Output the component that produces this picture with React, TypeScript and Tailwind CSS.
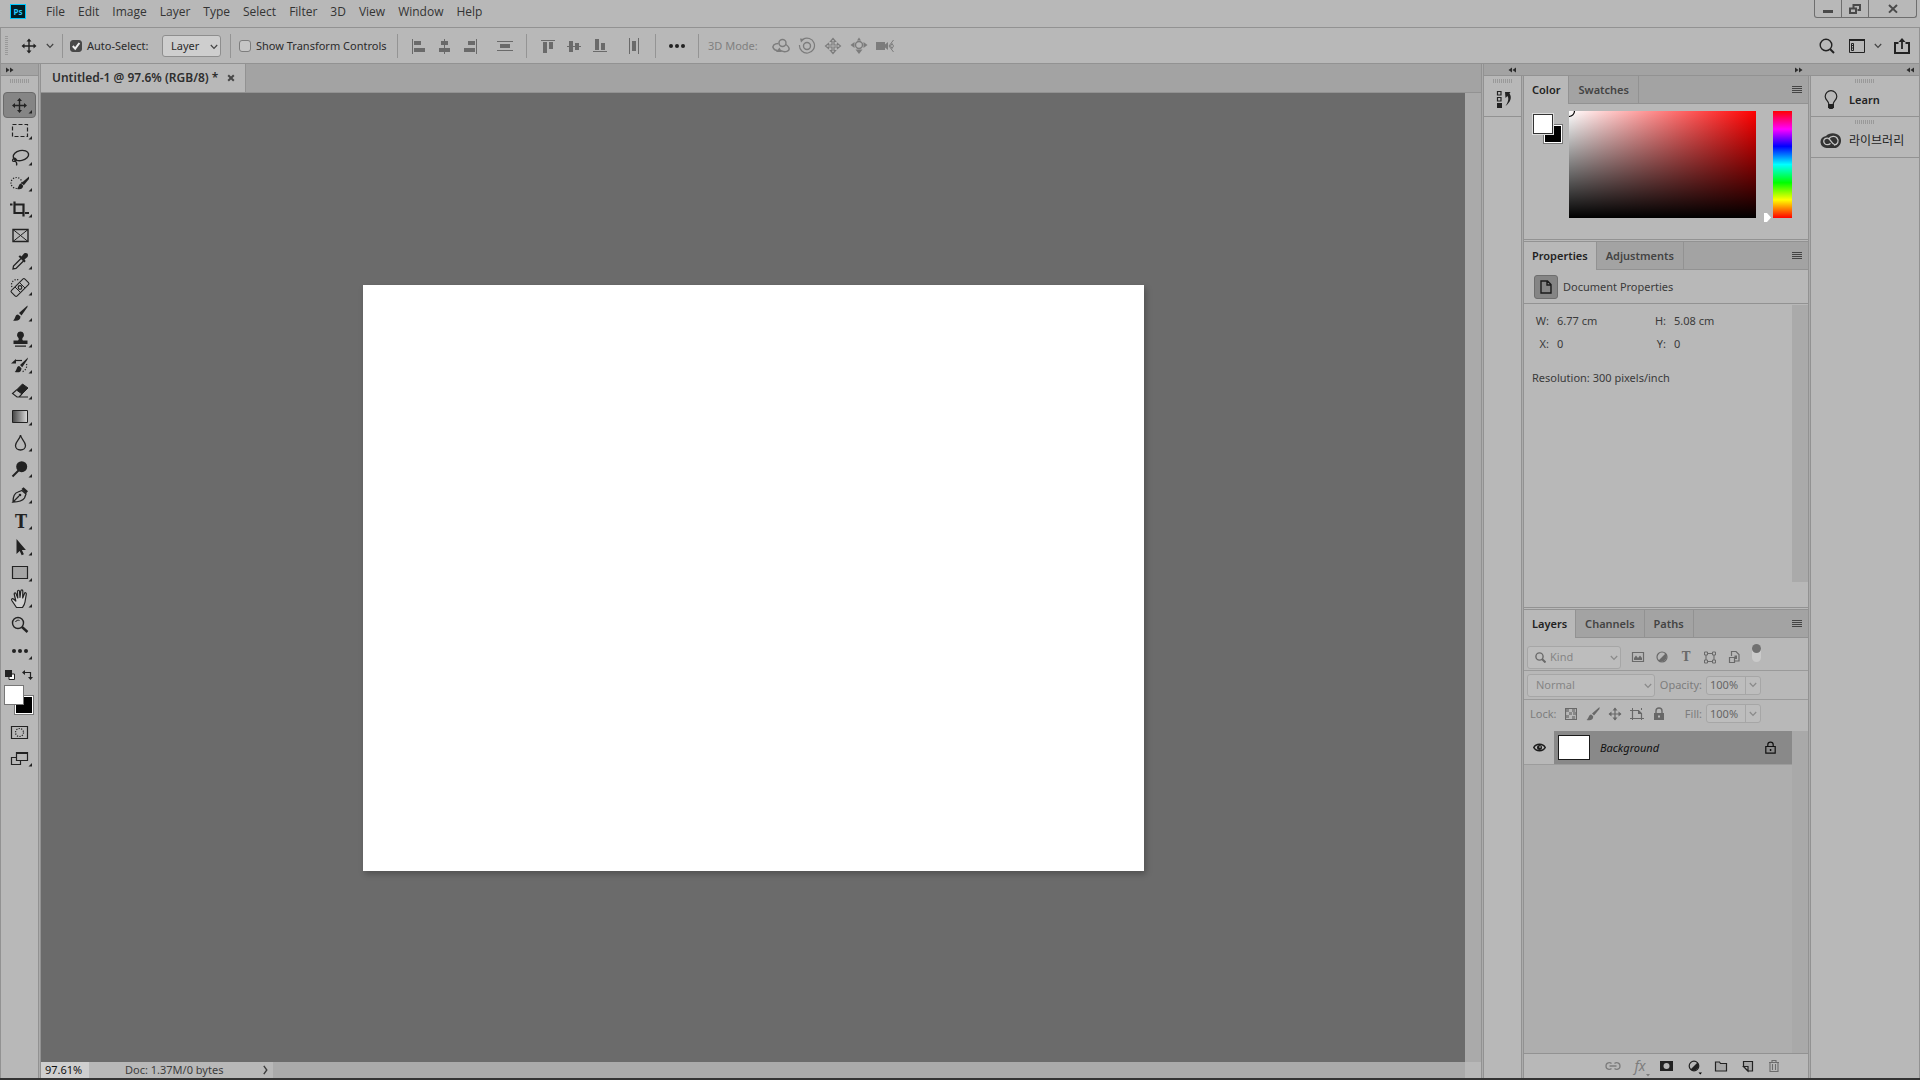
import { useState } from "react";
import type { ReactNode } from "react";
import { clsx } from "clsx";

const menus = ["File", "Edit", "Image", "Layer", "Type", "Select", "Filter", "3D", "View", "Window", "Help"];

function Icon({ w, h, className, children }: { w: number; h: number; className?: string; children: ReactNode }) {
  return (
    <svg
      width={w}
      height={h}
      viewBox={`0 0 ${w} ${h}`}
      fill="none"
      stroke="currentColor"
      strokeWidth="1.4"
      aria-hidden="true"
      className={clsx("block shrink-0", className)}
    >
      {children}
    </svg>
  );
}

function Chevron({ className }: { className?: string }) {
  return (
    <Icon w={8} h={6} className={className}>
      <path d="M.8 1 4 4.400 7.200 1" strokeWidth="1.2" />
    </Icon>
  );
}

function DoubleChevron({ left = false }: { left?: boolean }) {
  return (
    <Icon w={8} h={6} className="text-[#2c2c2c]">
      <path d={left ? "M4 .5v5L.5 3zM8 .5v5L4.500 3z" : "M0 .5v5L3.500 3zM4 .5v5L7.500 3z"} fill="currentColor" stroke="none" />
    </Icon>
  );
}

function Grip() {
  return (
    <div className="mx-auto mt-[3px] h-1 w-5 shrink-0 bg-[repeating-linear-gradient(90deg,#999_0_1px,transparent_1px_2px)]" />
  );
}

function Divider() {
  return <div className="h-6 w-px shrink-0 bg-[#949494]" />;
}

function Seam() {
  return <div className="w-[3px] shrink-0 border-x border-[#929292] bg-[#ababab]" />;
}

/* ---------- menu bar ---------- */

function MenuBar() {
  return (
    <header className="flex h-7 shrink-0 items-start border-b border-[#929292] pl-2.5">
      <div className="mt-1 flex h-[15px] w-4 items-center justify-center border border-[#00c8ff] bg-[#001d26] text-[8px] leading-none font-bold text-[#26c9ff]">
        Ps
      </div>
      <nav className="ml-5 flex h-6 items-center gap-[13px] font-['Open_Sans','Noto_Sans',sans-serif] text-xs text-[#333]">
        {menus.map((m) => (
          <button key={m}>{m}</button>
        ))}
      </nav>
      <div className="mr-[3px] ml-auto flex h-[18px] rounded-b-[3px] border border-t-0 border-[#6e6e6e] text-[#4a4a4a]">
        <button aria-label="Minimize" className="flex w-[27px] items-end justify-center border-r border-[#6e6e6e] pb-1">
          <span className="h-[3px] w-2.5 bg-[#4a4a4a]" />
        </button>
        <button aria-label="Restore" className="flex w-[27px] items-center justify-center border-r border-[#6e6e6e]">
          <Icon w={12} h={10}>
            <path d="M4.500 3.500V1H11v5H8.500M1 4.500h6V9H1z" strokeWidth="2" />
          </Icon>
        </button>
        <button aria-label="Close" className="flex w-[47px] items-center justify-center">
          <Icon w={10} h={10}>
            <path d="m1 1 8 7.600M9 1 1 8.600" strokeWidth="2" />
          </Icon>
        </button>
      </div>
    </header>
  );
}

/* ---------- options bar ---------- */

function Check({ label, checked = false, className }: { label: string; checked?: boolean; className?: string }) {
  const [on, setOn] = useState(checked);
  return (
    <label className={clsx("flex items-center gap-[5px]", className)}>
      <span className="relative block size-3">
        <input
          type="checkbox"
          checked={on}
          onChange={() => setOn(!on)}
          className="block size-3 appearance-none rounded-[3px] border border-[#7d7d7d] bg-[#c6c6c6] checked:border-[#484848] checked:bg-[#484848]"
        />
        {on && (
          <Icon w={12} h={12} className="pointer-events-none absolute inset-0 text-[#eee]">
            <path d="M2.800 6l2.400 2.600L9.400 3" strokeWidth="2" />
          </Icon>
        )}
      </span>
      {label}
    </label>
  );
}

const alignX = [
  { name: "Align left edges", d: "M1 2h1v15H1zM3 4h7v4H3zM3 11h11v4H3z" },
  { name: "Align horizontal centers", d: "M7 2h1v15H7zM4 4h7v4H4zM2 11h11v4H2z" },
  { name: "Align right edges", d: "M13 2h1v15h-1zM5 4h7v4H5zM1 11h11v4H1z" },
  { name: "Distribute vertically", d: "M0 4h16v1H0zM3 7h10v4H3zM0 13h16v1H0z" },
];

const alignY = [
  { name: "Align top edges", d: "M1 3h14v1H1zM3 5h4v11H3zM9 5h4v7H9z" },
  { name: "Align vertical centers", d: "M1 9h14v1H1zM3 4h4v11H3zM9 6h4v7H9z" },
  { name: "Align bottom edges", d: "M1 14h14v1H1zM3 2h4v11H3zM9 6h4v7H9z" },
  { name: "Distribute horizontally", d: "M3 1h1v16H3zM6 4h4v10H6zM12 1h1v16h-1z" },
];

function AlignGroup({ items }: { items: { name: string; d: string }[] }) {
  return (
    <div className="flex w-32 shrink-0 items-center gap-2.5 pl-[13px] text-[#6a6a6a]">
      {items.map((item) => (
        <button key={item.name} aria-label={item.name} className="last:ml-2">
          <Icon w={16} h={18}>
            <path d={item.d} fill="currentColor" stroke="none" />
          </Icon>
        </button>
      ))}
    </div>
  );
}

function ThreeDIcons() {
  return (
    <div className="flex items-center gap-1.5 text-[#7c7c7c]">
      <button aria-label="Orbit the 3D camera">
        <Icon w={20} h={18}>
          <circle cx="11.500" cy="6" r="3.500" />
          <path d="M7.500 6.500C3 6.500 1 9 2.500 11.500c1 1.500 3 2 4 2M10 13.500c4 2.500 9 .5 8-2.500-.4-1.200-1.600-2.500-3-3.500" />
          <path d="M8.500 10.500l2.500 4.500H5z" fill="currentColor" stroke="none" />
        </Icon>
      </button>
      <button aria-label="Roll the 3D camera">
        <Icon w={20} h={18}>
          <circle cx="10" cy="9" r="3.500" />
          <path d="M6 2.200A7.500 7.500 0 1 1 2.500 8" strokeWidth="1.2" />
          <path d="M3 1.500l4.500.5L4 5.500z" fill="currentColor" stroke="none" />
        </Icon>
      </button>
      <button aria-label="Pan the 3D camera">
        <Icon w={20} h={18}>
          <path
            d="M10 1.500L12.500 4.500H11V8h3.500V6.500L17.500 9l-3 2.500V10H11v3.500h1.500L10 16.500l-2.500-3H9V10H5.500v1.500L2.500 9l3-2.500V8H9V4.500H7.500z"
            strokeWidth="1.2"
          />
        </Icon>
      </button>
      <button aria-label="Slide the 3D camera">
        <Icon w={20} h={18}>
          <circle cx="10" cy="8" r="3.500" />
          <path d="M10 .5l2 3H8zM1.500 8l4-3v6zM18.500 8l-4-3v6zM10 17l-3.500-4.500h7z" fill="currentColor" stroke="none" />
        </Icon>
      </button>
      <button aria-label="Zoom the 3D camera">
        <Icon w={20} h={18}>
          <path d="M1 5h9v2.500L13 5v8l-3-2.500V13H1z" fill="currentColor" stroke="none" />
          <path d="M18.500 3L14 9l4.500 6M17 6.500L18.500 9 17 11.500 15.500 9z" strokeWidth="1" />
        </Icon>
      </button>
    </div>
  );
}

function OptionsBar() {
  return (
    <div className="flex h-9 shrink-0 items-center border-x border-b border-[#929292] pl-1 text-[#2b2b2b]">
      <div className="h-5 w-[3px] bg-[repeating-linear-gradient(#999_0_1px,transparent_1px_2px)]" />
      <button aria-label="Move tool presets" className="ml-[13px] flex items-center gap-[9px] pr-2">
        <Icon w={16} h={16} className="text-[#222]">
          <path d="M8 2v12M2 8h12" />
          <path d="M8 .5l2.500 3h-5zM8 15.500l2.500-3h-5zM.5 8l3-2.500v5zM15.500 8l-3-2.500v5z" fill="currentColor" stroke="none" />
        </Icon>
        <Chevron className="text-[#444]" />
      </button>
      <Divider />
      <div className="flex w-[167px] shrink-0 items-center pl-[7px]">
        <Check label="Auto-Select:" checked />
        <div className="relative mr-[9px] ml-auto">
          <select
            aria-label="Auto-select target"
            className="block h-[22px] w-[59px] appearance-none rounded-[3px] border border-[#8e8e8e] bg-[#cecece] pl-2"
          >
            <option>Layer</option>
            <option>Group</option>
          </select>
          <Chevron className="pointer-events-none absolute top-[9px] right-[3px] text-[#444]" />
        </div>
      </div>
      <Divider />
      <Check label="Show Transform Controls" className="w-[166px] shrink-0 pl-2" />
      <Divider />
      <AlignGroup items={alignX} />
      <Divider />
      <AlignGroup items={alignY} />
      <Divider />
      <button aria-label="More options" className="flex w-[42px] shrink-0 justify-center">
        <Icon w={16} h={4}>
          <g fill="#222" stroke="none">
            <circle cx="2" cy="2" r="2" />
            <circle cx="8" cy="2" r="2" />
            <circle cx="14" cy="2" r="2" />
          </g>
        </Icon>
      </button>
      <Divider />
      <span className="w-[72px] shrink-0 pl-[9px] text-[#808080]">3D Mode:</span>
      <ThreeDIcons />
      <div className="ml-auto flex items-center pr-[9px] text-[#222]">
        <button aria-label="Search">
          <Icon w={16} h={16}>
            <circle cx="7" cy="7" r="5.800" />
            <path d="M11 11l4 4" strokeWidth="2" />
          </Icon>
        </button>
        <button aria-label="Choose a workspace" className="ml-[14px] flex items-center gap-[9px]">
          <Icon w={16} h={14}>
            <path d="M.5 1.500h15v12H.5z" strokeWidth="1" />
            <path d="M0 0h16v2H0z" fill="currentColor" stroke="none" />
            <path d="M2.500 4.500h2v7h-2zM2.500 6.500h2M2.500 9h2" strokeWidth="1" />
          </Icon>
          <Chevron className="text-[#444]" />
        </button>
        <button aria-label="Share" className="ml-3">
          <Icon w={16} h={16}>
            <path d="M4.500 5H1v10h14V5h-3.500" strokeWidth="2" />
            <path d="M8 11V2" strokeWidth="1.8" />
            <path d="M8 0l3.500 4h-7z" fill="currentColor" stroke="none" />
          </Icon>
        </button>
      </div>
    </div>
  );
}

/* ---------- tools ---------- */

// every glyph is drawn in a 32x26 cell
const tools: { name: string; glyph: ReactNode; single?: boolean }[] = [
  {
    name: "Move",
    glyph: (
      <>
        <path d="M16.500 8v11M11 13.500h11" />
        <path d="M16.500 6l2.500 3h-5zM16.500 21l2.500-3h-5zM9 13.500l3-2.500v5zM24 13.500l-3-2.500v5z" fill="currentColor" stroke="none" />
      </>
    ),
  },
  { name: "Rectangular marquee", glyph: <path d="M9.500 6.500h15v12h-15z" strokeWidth="1.2" strokeDasharray="4 2" /> },
  {
    name: "Lasso",
    glyph: (
      <>
        <ellipse cx="17.800" cy="11.500" rx="7.800" ry="5" transform="rotate(-12 18 11)" />
        <path d="M11 14.500c-2 .5-2 3 0 3 2.500 0 3-2 1.500-3s-2 .5-.5 2 2.500 3 1.500 5" strokeWidth="1.2" />
      </>
    ),
  },
  {
    name: "Quick selection",
    glyph: (
      <>
        <circle cx="13.500" cy="13" r="5.500" strokeWidth="1.2" strokeDasharray="1.2 1.5" />
        <path d="M26 6.500L18.500 13l2.300 2.300L26 9z" fill="currentColor" stroke="none" />
        <path d="M18 13.500c-2.500.5-2 3.500-4 5.500 3 1 6 0 6.200-3.200z" fill="currentColor" stroke="none" />
      </>
    ),
  },
  { name: "Crop", glyph: <path d="M11.500 5.500V17h8M7 8.500h2.500M11.500 8.500h9v12M22 17h4" strokeWidth="2.2" /> },
  {
    name: "Frame",
    single: true,
    glyph: (
      <>
        <path d="M10 7.500h15v12H10z" />
        <path d="M10 7.500l15 12M25 7.500l-15 12" strokeWidth="1" />
      </>
    ),
  },
  {
    name: "Eyedropper",
    glyph: (
      <>
        <path d="M18 10.500L10.500 18l-.5 3 3-.5 7.500-7.500" strokeWidth="1.3" />
        <path
          d="M15.500 8.500l1.500-1.200 1.500 1.200 2.500-3c3-1.500 5 .8 3.500 3.500l-3 2.500 1.200 1.500-1.300 1.500z"
          fill="currentColor"
          stroke="none"
        />
      </>
    ),
  },
  {
    name: "Spot healing brush",
    glyph: (
      <>
        <path d="M9 13c-2-4 2-9 7-7" strokeWidth="1.2" strokeDasharray="1.2 1.5" />
        <rect x="7.500" y="9.500" width="19" height="8" rx="1.500" transform="rotate(-45 17 13.500)" strokeWidth="1.1" />
        <path d="M12 13l5.500 5.500M16.500 8.500L22 14" strokeWidth="1" />
        <circle cx="17" cy="13.500" r="1.800" strokeWidth="1.2" />
      </>
    ),
  },
  {
    name: "Brush",
    glyph: (
      <>
        <path d="M24.500 5.500L16 13l2.500 2.500 6-8.500z" fill="currentColor" stroke="none" />
        <path d="M15 14.500c-3.500.5-2 4-5 6 4 1 7.500 0 7.500-4z" fill="currentColor" stroke="none" />
      </>
    ),
  },
  {
    name: "Clone stamp",
    glyph: (
      <path
        d="M17.500 5.500a3.500 3.500 0 0 1 2.200 6.200c-.7.800-.5 2 .3 2.800h4.500V18h-14v-3.500H15c.8-.8 1-2 .3-2.800a3.500 3.500 0 0 1 2.200-6.200zM12 19.500h11v1.200H12z"
        fill="currentColor"
        stroke="none"
      />
    ),
  },
  {
    name: "History brush",
    glyph: (
      <>
        <path
          d="M25 5.500L17 13l2.200 2.200 5.300-7.700zM16.200 14c-3 .5-2 4-4.500 6 4 1 6.800 0 6.800-3.800z"
          fill="currentColor"
          stroke="none"
        />
        <path d="M8 11.500L13 7v4.500z" fill="currentColor" stroke="none" />
        <path d="M12 8.500h7" strokeWidth="1.2" />
        <path d="M23.500 12c1 3-1 7-5 8" strokeWidth="1.2" strokeDasharray="1.2 1.5" />
      </>
    ),
  },
  {
    name: "Eraser",
    glyph: (
      <>
        <path d="M19.500 6l5.500 4-6 6-5.500-4z" fill="currentColor" strokeWidth="1" />
        <path d="M13.500 12l-4 3.500 4.500 3.500h2l3-3M14 19h11" strokeWidth="1.1" />
      </>
    ),
  },
  {
    name: "Gradient",
    glyph: (
      <>
        <defs>
          <linearGradient id="tool-gradient">
            <stop stopColor="#444" />
            <stop offset="1" stopColor="#ddd" />
          </linearGradient>
        </defs>
        <path d="M9.500 6.500h15v12h-15z" fill="url(#tool-gradient)" strokeWidth="1" />
      </>
    ),
  },
  { name: "Blur", glyph: <path d="M17.500 5c.5 4 5 6.500 5 10.500a5 4.500 0 0 1-10 0c0-4 4.500-6 5-10.500z" strokeWidth="1.3" /> },
  {
    name: "Dodge",
    glyph: (
      <>
        <circle cx="18.700" cy="10.700" r="5.500" fill="currentColor" stroke="none" />
        <path d="M9.500 20.500l6-6" strokeWidth="2" />
      </>
    ),
  },
  {
    name: "Pen",
    glyph: (
      <>
        <path d="M10 20c0-5 1.500-9 5-10l4-1.500L23 12l-1.500 4c-2 3-6 4-11.500 4l6-6" strokeWidth="1.3" />
        <circle cx="17" cy="13" r="1.300" fill="currentColor" stroke="none" />
        <path d="M18.500 7l2-1.800 4.500 4-2 2.300z" fill="currentColor" stroke="none" />
      </>
    ),
  },
  {
    name: "Type",
    glyph: (
      <text x="18" y="20" textAnchor="middle" className="fill-current stroke-none font-['DejaVu_Serif_Condensed','DejaVu_Serif',serif] text-[18px] font-bold">
        T
      </text>
    ),
  },
  { name: "Path selection", glyph: <path d="M13.500 5v15l3.200-3 2 4.200 2.200-1-2-4.200h4z" fill="currentColor" stroke="none" /> },
  { name: "Rectangle", glyph: <path d="M9.500 6.500h15v12h-15z" fill="#a6a6a6" strokeWidth="1.2" /> },
  {
    name: "Hand",
    glyph: (
      <path
        d="M13.500 21.500L8.800 14.500c-.8-1.500.8-2.500 2-1.200l2 1.700-1.600-7c0-1.500 1.700-1.500 2 0l1.600 4-.3-6.500c0-1.700 2-1.700 2 0l.5 6 .8-6.500c.3-1.500 2-1.300 2 0L19.700 12l1.800-4.500c.5-1.300 2-.8 1.800.6L22 16c-.4 2.500-1.500 4-2.500 5.500z"
        fill="#d0d0d0"
        strokeWidth="1.2"
        strokeLinejoin="round"
      />
    ),
  },
  {
    name: "Zoom",
    single: true,
    glyph: (
      <>
        <circle cx="15" cy="11" r="5.500" />
        <path d="M12.500 10c.5-1.500 2.500-2.300 4-1.500" strokeWidth="1" />
        <path d="M19 15l5.500 5" strokeWidth="2.4" />
      </>
    ),
  },
  {
    name: "Edit toolbar",
    glyph: (
      <g fill="currentColor" stroke="none">
        <circle cx="11" cy="13" r="2" />
        <circle cx="17" cy="13" r="2" />
        <circle cx="23" cy="13" r="2" />
      </g>
    ),
  },
];

function Toolbar() {
  const [active, setActive] = useState("Move");
  return (
    <aside className="flex w-[38px] shrink-0 flex-col border-l border-[#929292] text-[#222]">
      <div className="flex h-3 shrink-0 items-center border-b border-[#929292] bg-[#a3a3a3] pl-[5px]">
        <DoubleChevron />
      </div>
      <Grip />
      <div className="mt-[9px] pl-0.5">
        {tools.map((t) => (
          <button
            key={t.name}
            aria-label={t.name}
            onClick={() => setActive(t.name)}
            className={clsx(
              "block h-[26px] w-[33px] rounded-sm border",
              active === t.name ? "border-[#6a6a6a] bg-[#858585]" : "border-transparent"
            )}
          >
            <Icon w={32} h={26} className="-mt-px -ml-px">
              {t.glyph}
              {!t.single && <path d="M29 18v3.500h-3.500z" fill="currentColor" stroke="none" />}
            </Icon>
          </button>
        ))}
      </div>
      <div className="flex justify-between pt-1.5 pr-[5px] pl-1">
        <button aria-label="Default colors">
          <Icon w={10} h={10}>
            <path d="M4 4h5.500v5.500H4z" fill="#fff" strokeWidth="1" />
            <path d="M0 0h7v7H0z" fill="currentColor" stroke="none" />
          </Icon>
        </button>
        <button aria-label="Switch colors">
          <Icon w={11} h={10}>
            <path d="M2 2.500h6.500V8" strokeWidth="1.2" />
            <path d="M0 2.500L3 0v5zM8.500 10L6 7h5z" fill="currentColor" stroke="none" />
          </Icon>
        </button>
      </div>
      <div className="mt-[5px] ml-[3px] grid size-[30px] shrink-0 grid-cols-3 grid-rows-3">
        <button aria-label="Background color" className="col-[2/4] row-[2/4] border border-[#777] bg-black outline -outline-offset-2 outline-white" />
        <button aria-label="Foreground color" className="col-[1/3] row-[1/3] border border-[#777] bg-white" />
      </div>
      <button aria-label="Quick mask" className="mt-1 ml-0.5 block">
        <Icon w={32} h={26}>
          <path d="M8.500 7.500h16v12h-16z" strokeWidth="1.2" />
          <circle cx="16.500" cy="13.500" r="4" strokeWidth="1.2" strokeDasharray="1.2 1.3" />
        </Icon>
      </button>
      <button aria-label="Screen mode" className="ml-0.5 block">
        <Icon w={32} h={26}>
          <path d="M8.500 12.500h9v7h-9z" strokeWidth="1.2" />
          <path d="M13.500 7.500h11v8h-11z" fill="#b8b8b8" strokeWidth="1.2" />
          <path d="M13 7h12v2H13z" fill="currentColor" stroke="none" />
          <path d="M29 18v3.500h-3.500z" fill="currentColor" stroke="none" />
        </Icon>
      </button>
    </aside>
  );
}

/* ---------- document window ---------- */

function DocumentWindow() {
  return (
    <main className="flex min-w-0 flex-1 flex-col">
      <div className="flex h-[29px] shrink-0 border-b border-[#929292] bg-[#a3a3a3]">
        <div className="flex w-[205px] items-center justify-between border-r border-[#929292] bg-[#b8b8b8] pr-2.5 pl-[11px] text-xs font-semibold whitespace-nowrap text-[#2e2e2e]">
          Untitled-1 @ 97.6% (RGB/8) *
          <button aria-label="Close document">
            <Icon w={8} h={8} className="text-[#484848]">
              <path d="M1.200 1.200l5.600 5.600M6.800 1.200L1.200 6.800" strokeWidth="2" />
            </Icon>
          </button>
        </div>
      </div>
      <div className="flex min-h-0 flex-1">
        <div className="flex flex-1 items-center justify-center overflow-hidden bg-[#6b6b6b]">
          <div className="h-[586px] w-[781px] shrink-0 bg-white shadow-[2px_3px_6px_rgba(0,0,0,0.25)]" />
        </div>
        <div className="w-4 shrink-0 bg-[#aaa]" />
      </div>
      <footer className="flex h-4 shrink-0">
        <input aria-label="Zoom level" defaultValue="97.61%" className="w-12 bg-[#cfcfcf] pl-1 text-[#111]" />
        <div className="flex w-[184px] items-center justify-between pr-[5px] pl-9 text-[#3c3c3c]">
          Doc: 1.37M/0 bytes
          <button aria-label="Status options">
            <Icon w={5} h={10}>
              <path d="M.8.8L3.800 5 .8 9.200" />
            </Icon>
          </button>
        </div>
        <div className="mr-4 flex-1 bg-[#aaa]" />
      </footer>
    </main>
  );
}

/* ---------- panels ---------- */

function PanelTabs({ tabs }: { tabs: string[] }) {
  return (
    <div className="flex h-7 shrink-0 bg-[#a3a3a3] font-semibold text-[#444]">
      {tabs.map((t, i) => (
        <button
          key={t}
          className={clsx("border-r border-[#929292]", i === 0 ? "bg-[#b8b8b8] px-2 text-[#222]" : "border-b px-[9px]")}
        >
          {t}
        </button>
      ))}
      <div className="flex flex-1 items-center justify-end border-b border-[#929292] pr-1.5">
        <button aria-label="Panel menu" className="block h-[7px] w-2.5 bg-[repeating-linear-gradient(#444_0_1px,transparent_1px_2px)]" />
      </div>
    </div>
  );
}

function ColorPanel() {
  return (
    <section className="flex h-[163px] shrink-0 flex-col">
      <PanelTabs tabs={["Color", "Swatches"]} />
      <div className="flex pt-[7px] pr-4 pl-[9px]">
        <div className="mt-[3px] grid size-[30px] shrink-0 grid-cols-3 grid-rows-3">
          <button aria-label="Background" className="col-[2/4] row-[2/4] border border-[#777] bg-black outline -outline-offset-2 outline-white" />
          <button aria-label="Foreground" className="col-[1/3] row-[1/3] border border-[#333] bg-white outline outline-[#ddd]" />
        </div>
        <div className="ml-1.5 h-[107px] flex-1 overflow-hidden bg-[linear-gradient(to_bottom,transparent,#000),linear-gradient(to_right,#fff,#f00)]">
          <Icon w={8} h={8}>
            <path d="M5.500 0A5.500 5.500 0 0 1 0 5.500" stroke="#000" strokeWidth="1.2" />
          </Icon>
        </div>
        <div className="ml-2 flex w-[9px] items-end">
          <Icon w={7} h={9} className="-mb-1">
            <path d="M0 0h3l4 4.500L3 9H0z" fill="#fff" stroke="none" />
          </Icon>
        </div>
        <div className="h-[107px] w-[19px] bg-[linear-gradient(to_bottom,#f00,#f0f_17%,#00f_33%,#0ff_50%,#0f0_67%,#ff0_83%,#f00)]" />
      </div>
    </section>
  );
}

function PropertiesPanel() {
  return (
    <section className="flex h-[365px] shrink-0 flex-col text-[#3a3a3a]">
      <PanelTabs tabs={["Properties", "Adjustments"]} />
      <div className="flex h-[34px] shrink-0 items-center gap-[5px] border-b border-[#929292] pl-2.5">
        <div className="flex size-6 items-center justify-center rounded-[3px] border border-[#6e6e6e] bg-[#858585] text-[#1a1a1a]">
          <Icon w={12} h={14}>
            <path d="M1 1h6.500L11 4.500V13H1zM7 1v4h4" />
          </Icon>
        </div>
        <span className="pt-px">Document Properties</span>
      </div>
      <div className="flex min-h-0 flex-1 pt-px">
        <div className="flex-1 pt-1 pl-2">
          <dl className="grid grid-cols-[17px_87px_14px_1fr] gap-x-2 leading-[23px]">
            <dt className="text-right">W:</dt>
            <dd>6.77 cm</dd>
            <dt className="text-right">H:</dt>
            <dd>5.08 cm</dd>
            <dt className="text-right">X:</dt>
            <dd>0</dd>
            <dt className="text-right">Y:</dt>
            <dd>0</dd>
          </dl>
          <p className="mt-3 leading-[22px]">Resolution: 300 pixels/inch</p>
        </div>
        <div className="mb-[25px] w-4 bg-[#aaa]" />
      </div>
    </section>
  );
}

function PercentField({ id, label }: { id: string; label: string }) {
  return (
    <div className="flex items-center gap-1">
      <label htmlFor={id} className="text-[#7d7d7d]">
        {label}
      </label>
      <div className="flex h-[19px] w-[55px] rounded-[3px] border border-[#a6a6a6] bg-[#bdbdbd] text-[#666]">
        <input id={id} defaultValue="100%" className="w-[39px] border-r border-[#a6a6a6] pl-[3px]" />
        <button aria-label={`${label} slider`} className="flex flex-1 items-center justify-center text-[#8a8a8a]">
          <Chevron />
        </button>
      </div>
    </div>
  );
}

function LayersPanel() {
  return (
    <section className="flex min-h-0 flex-1 flex-col">
      <PanelTabs tabs={["Layers", "Channels", "Paths"]} />
      <div className="flex h-[33px] shrink-0 items-center border-b border-[#9a9a9a] pt-1.5 pl-[3px] text-[#6a6a6a]">
        <div className="relative">
          <select
            aria-label="Filter layers"
            className="block h-[23px] w-[94px] appearance-none rounded-[3px] border border-[#a6a6a6] bg-[#bdbdbd] pl-[22px] text-[#858585]"
          >
            <option>Kind</option>
            <option>Name</option>
          </select>
          <Icon w={11} h={11} className="pointer-events-none absolute top-1.5 left-2">
            <circle cx="4.500" cy="4.500" r="3.600" />
            <path d="M7 7l3.500 3.500" strokeWidth="2" />
          </Icon>
          <Chevron className="pointer-events-none absolute top-[9px] right-[3px] text-[#8a8a8a]" />
        </div>
        <div className="ml-[9px] flex items-center gap-2">
          <button aria-label="Filter for pixel layers">
            <Icon w={16} h={14}>
              <path d="M2.500 2.500h11v9h-11z" strokeWidth="1.2" />
              <path d="M4 10V8l2-2.500L8 8l2-2.500L12 8v2z" fill="currentColor" stroke="none" />
            </Icon>
          </button>
          <button aria-label="Filter for adjustment layers">
            <Icon w={16} h={14}>
              <circle cx="8" cy="7" r="5" strokeWidth="1.2" />
              <path d="M11.500 3.500A5 5 0 0 1 4.500 10.500z" fill="currentColor" stroke="none" />
            </Icon>
          </button>
          <button
            aria-label="Filter for type layers"
            className="w-4 font-['DejaVu_Serif_Condensed','DejaVu_Serif',serif] text-[13px] leading-[14px] font-bold"
          >
            T
          </button>
          <button aria-label="Filter for shape layers">
            <Icon w={16} h={14}>
              <path d="M4 3.500h8v8H4z" strokeWidth="1.1" />
              <path d="M2.500 2h3v3h-3zM10.500 2h3v3h-3zM2.500 10h3v3h-3zM10.500 10h3v3h-3z" fill="#b8b8b8" strokeWidth="1" />
            </Icon>
          </button>
          <button aria-label="Filter for smart objects">
            <Icon w={16} h={14}>
              <path d="M5.500 6V1.500H10l3 3V11H9" strokeWidth="1.2" />
              <path d="M3.500 7.500h5v5h-5z" strokeWidth="1.2" />
              <path d="M8.500 5.500H11V9H8.500z" fill="currentColor" stroke="none" />
            </Icon>
          </button>
        </div>
        <button
          aria-label="Layer filtering on or off"
          className="ml-2.5 flex h-[18px] w-[9px] items-start self-start rounded-full bg-[#cacaca]"
        >
          <span className="size-[9px] rounded-full bg-[#707070]" />
        </button>
      </div>
      <div className="flex h-[29px] shrink-0 items-center justify-between border-b border-[#9a9a9a] pr-[47px] pl-[3px]">
        <div className="relative">
          <select
            aria-label="Blend mode"
            className="block h-[23px] w-32 appearance-none rounded-[3px] border border-[#a6a6a6] bg-[#bdbdbd] pl-2 text-[#858585]"
          >
            <option>Normal</option>
            <option>Multiply</option>
          </select>
          <Chevron className="pointer-events-none absolute top-[9px] right-[3px] text-[#8a8a8a]" />
        </div>
        <PercentField id="opacity" label="Opacity:" />
      </div>
      <div className="flex h-[31px] shrink-0 items-start justify-between pt-1 pr-[47px] pl-1.5">
        <div className="flex h-[19px] items-center gap-1.5 text-[#686868]">
          <span className="w-[27px] text-[#7d7d7d]">Lock:</span>
          <button aria-label="Lock transparent pixels" className="mx-0.5">
            <Icon w={12} h={12}>
              <path d="M.5.5h11v11H.5z" strokeWidth="1.2" />
              <path
                d="M1 1h3v3H1zM7 1h3v3H7zM4 4h3v3H4zM8 4h3v3H8zM1 7h3v3H1zM7 8h3v3H7z"
                fill="currentColor"
                stroke="none"
                opacity=".6"
              />
            </Icon>
          </button>
          <button aria-label="Lock image pixels">
            <Icon w={16} h={14}>
              <path
                d="M14.500 0L7 6.500 9 8.500 14.500 2zM6.200 7.500c-3 .5-2 3.500-4.700 5.500 4 1 7 0 6.700-3.700z"
                fill="currentColor"
                stroke="none"
              />
            </Icon>
          </button>
          <button aria-label="Lock position">
            <Icon w={16} h={16}>
              <path d="M8 2v12M2 8h12" strokeWidth="1.2" />
              <path
                d="M8 1.500l2.500 3h-5zM8 14.500l2.500-3h-5zM1.500 8l3-2.500v5zM14.500 8l-3-2.500v5z"
                fill="currentColor"
                stroke="none"
              />
            </Icon>
          </button>
          <button aria-label="Lock artboard nesting">
            <Icon w={16} h={14}>
              <path d="M3.500 1v12M12.500 9v4M1 3.500h9M1 11.500h14M12.500 1v2" strokeWidth="1" />
              <path d="M3.500 3.500h6l3 3v5h-9z" strokeWidth="1.2" />
              <path d="M9 3l4 4H9z" fill="currentColor" stroke="none" />
            </Icon>
          </button>
          <button aria-label="Lock all">
            <Icon w={16} h={14}>
              <path d="M5 6V4a3 3 0 0 1 6 0v2" />
              <path d="M3 6h10v7H3z" fill="currentColor" stroke="none" />
              <path d="M7 8.500h2v2H7z" fill="#b8b8b8" stroke="none" />
            </Icon>
          </button>
        </div>
        <PercentField id="fill" label="Fill:" />
      </div>
      <div className="flex min-h-0 flex-1">
        <ul className="flex-1 bg-[#aeaeae]">
          <li className="flex h-[34px] border-b border-[#9c9c9c] bg-[#b8b8b8]">
            <button aria-label="Toggle visibility" className="flex w-[30px] items-center justify-center text-[#1c1c1c]">
              <Icon w={13} h={9}>
                <path d="M.8 4.500C3 .2 10 .2 12.200 4.500 10 8.800 3 8.800.8 4.500z" strokeWidth="1.6" />
                <circle cx="6.500" cy="4.500" r="2.500" fill="currentColor" stroke="none" />
                <circle cx="7" cy="4" r=".8" fill="#ddd" stroke="none" />
              </Icon>
            </button>
            <div className="flex flex-1 items-center bg-[#898989] pr-4 pl-1 text-[#111]">
              <div className="h-[25px] w-8 border border-[#1a1a1a] bg-white" />
              <span className="ml-2.5 italic">Background</span>
              <Icon w={11} h={13} className="ml-auto">
                <path d="M2.800 5.500V3.800a2.700 2.700 0 0 1 5.400 0v1.700M.8 5.500h9.400v6.700H.8z" strokeWidth="1.2" />
                <path d="M4.800 8h1.500v2H4.800z" fill="currentColor" stroke="none" />
              </Icon>
            </div>
          </li>
        </ul>
        <div className="w-4 bg-[#a9a9a9]" />
      </div>
      <div className="flex h-[25px] shrink-0 items-center justify-end gap-[7px] border-t border-[#929292] pr-[25px] text-[#222]">
        <button aria-label="Link layers" className="text-[#7c7c7c]">
          <Icon w={20} h={16}>
            <path
              d="M8.500 5.500C7 4 3 4.200 3 8s4 4 5.500 2.500M11.500 5.500C13 4 17 4.200 17 8s-4 4-5.500 2.500M6.500 8h7"
              strokeWidth="1.3"
            />
          </Icon>
        </button>
        <button aria-label="Layer effects" className="relative w-5 text-sm leading-4 text-[#7c7c7c] italic">
          fx
          <Icon w={4} h={3} className="absolute right-0 bottom-[-3px]">
            <path d="M0 0h4L2 2.500z" fill="currentColor" stroke="none" />
          </Icon>
        </button>
        <button aria-label="Add layer mask">
          <Icon w={20} h={16}>
            <path d="M3 3h13v10H3z" fill="currentColor" stroke="none" />
            <circle cx="9.500" cy="8" r="3" fill="#b8b8b8" stroke="none" />
          </Icon>
        </button>
        <button aria-label="New adjustment layer">
          <Icon w={20} h={16} className="overflow-visible">
            <circle cx="10" cy="8" r="4.800" strokeWidth="1.2" />
            <path d="M13.500 4.500L6.500 11.500A5 5 0 0 0 13.500 4.500z" fill="currentColor" stroke="none" />
            <path d="M14.500 14.500H18l-1.700 2z" fill="#000" stroke="none" />
          </Icon>
        </button>
        <button aria-label="New group">
          <Icon w={20} h={16}>
            <path d="M4.500 4h4l1 1.500h6V13h-11z" fill="#a6a6a6" strokeWidth="1.2" />
          </Icon>
        </button>
        <button aria-label="New layer">
          <Icon w={20} h={16}>
            <path d="M5.500 8V3.500h9V13H10z" fill="#a6a6a6" strokeWidth="1.2" />
            <path d="M5.500 8.500H10V13z" fill="#b8b8b8" strokeWidth="1.2" />
          </Icon>
        </button>
        <button aria-label="Delete layer" className="w-[18px] text-[#6c6c6c]">
          <Icon w={18} h={16}>
            <path d="M4 4.500h10M7 4V2.500h4V4M5 5v8.500h8V5M7.500 6v6M10.500 6v6" strokeWidth="1.1" />
          </Icon>
        </button>
      </div>
    </section>
  );
}

function PanelGap() {
  return <div className="h-[3px] shrink-0 border-y border-[#929292]" />;
}

function RightDock() {
  return (
    <div className="flex w-[436px] shrink-0 flex-col border-r border-[#929292]">
      <div className="flex h-3 shrink-0 items-center border-b border-[#929292] bg-[#a3a3a3]">
        <button aria-label="Expand history" className="pl-6">
          <DoubleChevron left />
        </button>
        <button aria-label="Collapse panels" className="mr-[103px] ml-auto">
          <DoubleChevron />
        </button>
        <button aria-label="Expand libraries" className="mr-[5px]">
          <DoubleChevron left />
        </button>
      </div>
      <div className="flex min-h-0 flex-1">
        <div className="w-[37px] shrink-0">
          <div className="flex h-[41px] flex-col border-b border-[#929292] text-[#222]">
            <Grip />
            <button aria-label="History" className="mt-[7px] ml-3">
              <Icon w={16} h={18}>
                <path d="M1.500 1.500H5V5H1.500zM1.500 7.500H5V11H1.500z" strokeWidth="1.2" />
                <path
                  d="M1 13h5v5H1zM9 2h5.500l-1 1.500C16 7 15 12 9.500 16c3-4.500 3.500-7.500 2-10L9.500 8z"
                  fill="currentColor"
                  stroke="none"
                />
              </Icon>
            </button>
          </div>
        </div>
        <Seam />
        <div className="flex min-w-0 flex-1 flex-col">
          <ColorPanel />
          <PanelGap />
          <PropertiesPanel />
          <PanelGap />
          <LayersPanel />
        </div>
        <Seam />
        <div className="w-[108px] shrink-0 text-[#222]">
          <div className="flex h-[41px] flex-col border-b border-[#929292]">
            <Grip />
            <button className="flex flex-1 items-center gap-[11px] pl-[13px] font-semibold">
              <Icon w={14} h={20}>
                <path d="M4.800 14c0-3-3.600-4-3.600-7.500a5.600 5.600 0 0 1 11.600 0C12.800 10 9.200 11 9.200 14" strokeWidth="1.2" />
                <path d="M4 14h6v3.500L8.500 19h-3L4 17.500z" fill="currentColor" stroke="none" />
              </Icon>
              Learn
            </button>
          </div>
          <div className="flex h-[41px] flex-col border-b border-[#929292]">
            <Grip />
            <button className="flex flex-1 items-center gap-[7px] pl-[9px] text-xs">
              <Icon w={22} h={16}>
                <path d="M7 15a6 6 0 0 1-1-12C9-.5 16-.8 19.500 3c3 4 1.500 10-3.500 12z" fill="#333" stroke="none" />
                <path
                  d="M14.500 11.500c-3.500-1.500-4-6-7-6.300-5-.3-5 6.500 0 6.500 1.500 0 2.500-.7 3-1.300M9 5.500C11 3 15 2.500 17 5c2.500 3 .5 7-3 7"
                  stroke="#c4c4c4"
                  strokeWidth="1.3"
                />
              </Icon>
              라이브러리
            </button>
          </div>
        </div>
      </div>
    </div>
  );
}

export default function App() {
  return (
    <div className="flex h-screen flex-col overflow-hidden border-b-2 border-[#333] bg-[#b8b8b8] font-['Noto_Sans','Noto_Sans_CJK_KR',sans-serif] text-[11px] leading-4">
      <MenuBar />
      <OptionsBar />
      <div className="flex min-h-0 flex-1">
        <Toolbar />
        <Seam />
        <DocumentWindow />
        <Seam />
        <RightDock />
      </div>
    </div>
  );
}
